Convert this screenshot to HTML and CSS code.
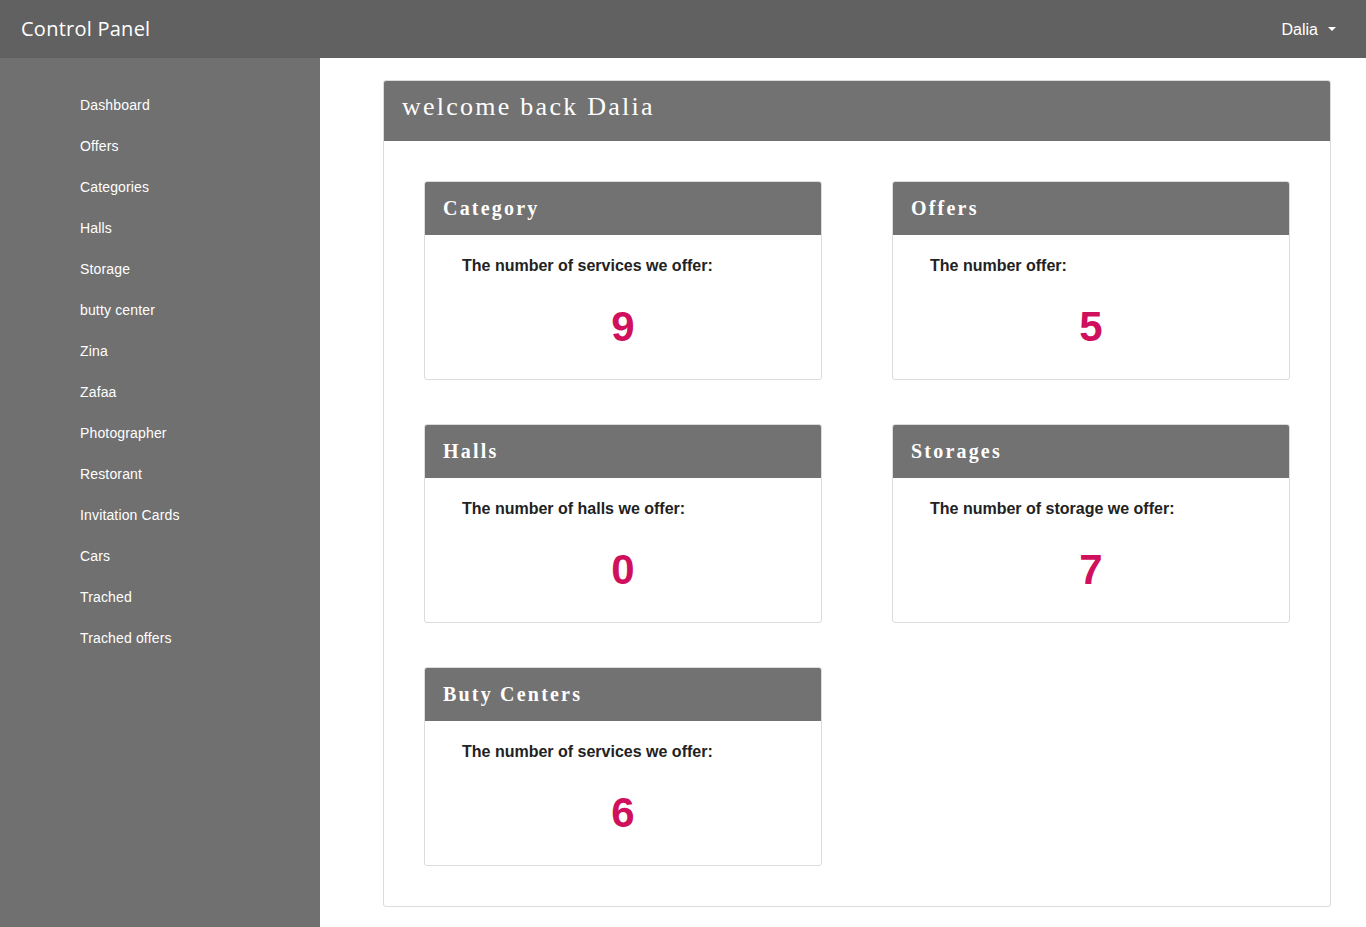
FILE: index.html
```html
<!DOCTYPE html>
<html>
<head>
<meta charset="utf-8">
<title>Control Panel</title>
<link rel="stylesheet" href="styles.css">
</head>
<body>
<nav class="topbar">
  <a class="brand" href="#">Control Panel</a>
  <div class="user">Dalia <span class="caret"></span></div>
</nav>
<div class="layout">
  <aside class="sidebar">
    <a href="#">Dashboard</a>
    <a href="#">Offers</a>
    <a href="#">Categories</a>
    <a href="#">Halls</a>
    <a href="#">Storage</a>
    <a href="#">butty center</a>
    <a href="#">Zina</a>
    <a href="#">Zafaa</a>
    <a href="#">Photographer</a>
    <a href="#">Restorant</a>
    <a href="#">Invitation Cards</a>
    <a href="#">Cars</a>
    <a href="#">Trached</a>
    <a href="#">Trached offers</a>
  </aside>
  <main class="main">
    <section class="panel">
      <header class="panel-head">welcome back Dalia</header>
      <div class="panel-body">
        <div class="stat">
          <div class="stat-head">Category</div>
          <div class="stat-body">
            <p class="stat-label">The number of services we offer:</p>
            <div class="stat-num">9</div>
          </div>
        </div>
        <div class="stat">
          <div class="stat-head">Offers</div>
          <div class="stat-body">
            <p class="stat-label">The number offer:</p>
            <div class="stat-num">5</div>
          </div>
        </div>
        <div class="stat">
          <div class="stat-head">Halls</div>
          <div class="stat-body">
            <p class="stat-label">The number of halls we offer:</p>
            <div class="stat-num">0</div>
          </div>
        </div>
        <div class="stat">
          <div class="stat-head">Storages</div>
          <div class="stat-body">
            <p class="stat-label">The number of storage we offer:</p>
            <div class="stat-num">7</div>
          </div>
        </div>
        <div class="stat">
          <div class="stat-head">Buty Centers</div>
          <div class="stat-body">
            <p class="stat-label">The number of services we offer:</p>
            <div class="stat-num">6</div>
          </div>
        </div>
      </div>
    </section>
  </main>
</div>
</body>
</html>
```
FILE: styles.css
```css
* { box-sizing: border-box; }
html, body { margin: 0; padding: 0; height: 100%; }
body {
  font-family: "Liberation Sans", Arial, sans-serif;
  background: #fff;
  overflow: hidden;
}
.topbar {
  height: 58px;
  background: #616161;
  display: flex;
  align-items: center;
  justify-content: space-between;
  padding: 0 30px 0 21px;
}
.brand {
  color: #fff;
  text-decoration: none;
  font-family: "Open Sans", "DejaVu Sans", sans-serif;
  font-size: 20px;
  letter-spacing: 0.25px;
  line-height: 1;
}
.user {
  color: #fff;
  font-size: 16px;
  display: flex;
  align-items: center;
  padding-top: 1px;
}
.caret {
  display: inline-block;
  margin-left: 10px;
  width: 0;
  height: 0;
  border-left: 4px solid transparent;
  border-right: 4px solid transparent;
  border-top: 4px solid #fff;
  margin-top: -2px;
}
.layout {
  display: flex;
  height: calc(100% - 58px);
}
.sidebar {
  width: 320px;
  flex: none;
  background: #707070;
  display: flex;
  flex-direction: column;
  padding: 27px 0 0 80px;
}
.sidebar a {
  color: #fff;
  text-decoration: none;
  font-size: 14px;
  letter-spacing: 0.15px;
  line-height: 21px;
  padding: 10px 0;
  height: 41px;
}
.main {
  flex: 1;
  padding: 22px 35px 0 63px;
}
.panel {
  border: 1px solid #dcdcdc;
  border-radius: 3px;
  overflow: hidden;
}
.panel-head {
  height: 60px;
  background: #727272;
  color: #fff;
  font-family: "Liberation Serif", "Times New Roman", serif;
  font-size: 26px;
  letter-spacing: 2.25px;
  line-height: 52px;
  padding: 0 18px;
}
.panel-body {
  display: grid;
  grid-template-columns: 398px 398px;
  column-gap: 70px;
  row-gap: 44px;
  padding: 40px;
}
.stat {
  border: 1px solid #dcdcdc;
  border-radius: 3px;
  overflow: hidden;
  height: 199px;
}
.stat-head {
  height: 53px;
  background: #727272;
  color: #fff;
  font-family: "Liberation Serif", "Times New Roman", serif;
  font-weight: bold;
  font-size: 20px;
  letter-spacing: 2.2px;
  line-height: 53px;
  padding: 0 18px;
}
.stat-body {
  padding: 21px 37px 0;
}
.stat-label {
  margin: 0;
  font-size: 16px;
  font-weight: bold;
  color: #222;
  line-height: 20px;
}
.stat-num {
  text-align: center;
  color: #d0105c;
  font-weight: bold;
  font-size: 42px;
  line-height: 48px;
  margin-top: 27px;
}
```
